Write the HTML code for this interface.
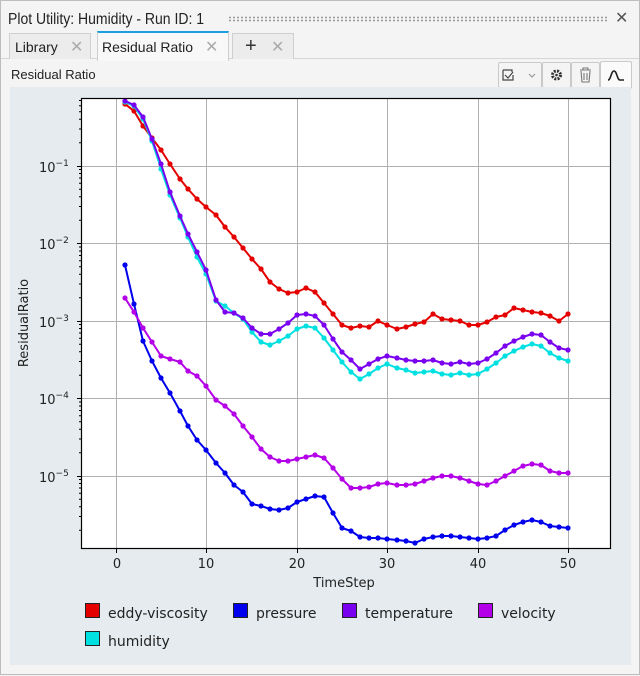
<!DOCTYPE html>
<html><head><meta charset="utf-8"><style>
body{margin:0;width:640px;height:675px;overflow:hidden;background:#f4f4f4;font-family:"Liberation Sans","DejaVu Sans",sans-serif;}
.win{position:absolute;left:0;top:0;width:638px;height:673px;border:1px solid #bdbdbd;background:#f4f4f4;}
.title{position:absolute;left:7px;top:10px;font-size:16px;color:#222;transform:scaleX(0.875);transform-origin:0 0;white-space:nowrap}
.dots{position:absolute;left:227px;top:15px;width:380px;height:6px;background-image:radial-gradient(circle,#999 0.8px,transparent 1px);background-size:4px 3px;}
.close{position:absolute;left:614px;top:7px;font-size:16px;color:#555;}
.tab{position:absolute;top:32px;height:25px;border:1px solid #cfcfcf;border-bottom:none;background:#ececec;font-size:14px;color:#222;}
.tab span{position:absolute;top:5px;}
.x{color:#aaa;font-size:16px}
.btn{position:absolute;border:1px solid #c9c9c9;border-radius:2px;background:#f4f4f4;}
</style></head><body><div class="win">
<div class="title">Plot Utility: Humidity - Run ID: 1</div>
<div class="dots"></div>
<div class="close">✕</div>
<div style="position:absolute;left:0;top:57px;width:638px;border-top:1px solid #d6d6d6"></div>
<div class="tab" style="left:8px;width:80px"><span style="left:5px">Library</span><span class="x" style="left:60px;top:3px">✕</span></div>
<div class="tab" style="left:96px;width:130px;background:#f8f8f8;border-top:2px solid #1aa0dc;top:30px;height:28px"><span style="left:4px;top:6px">Residual Ratio</span><span class="x" style="left:107px;top:4px">✕</span></div>
<div class="tab" style="left:231px;width:60px"><span style="left:12px;top:1px;font-size:20px;color:#333">+</span><span class="x" style="left:38px;top:3px">✕</span></div>
<div style="position:absolute;left:10px;top:66px;font-size:13px;color:#222">Residual Ratio</div>
<div class="btn" style="left:497px;top:61px;width:42px;height:24px"><svg width="42" height="24"><path d="M4 7h9v2M4 7v10h10v-5" fill="none" stroke="#444" stroke-width="1.2"/><path d="M6 12l3 3 5-6" fill="none" stroke="#444" stroke-width="1.2"/><path d="M30 11l3 3 3-3" fill="none" stroke="#999" stroke-width="1.2"/></svg></div>
<div class="btn" style="left:541px;top:61px;width:27px;height:24px"><svg width="27" height="24"><circle cx="13.5" cy="12" r="4" fill="none" stroke="#333" stroke-width="3" stroke-dasharray="2 1.2"/><circle cx="13.5" cy="12" r="1.3" fill="#333"/></svg></div>
<div class="btn" style="left:570px;top:61px;width:27px;height:24px"><svg width="27" height="24"><path d="M8 7h11M11 7V5h5v2M9 8l1 11h7l1-11M12 10v7M15 10v7" fill="none" stroke="#777" stroke-width="1.1"/></svg></div>
<div class="btn" style="left:599px;top:60px;width:30px;height:26px;background:#fafafa"><svg width="30" height="26"><path d="M7 18c3 0 3-9 6-9s3 9 6 9h4" fill="none" stroke="#222" stroke-width="1.6"/></svg></div>
<div style="position:absolute;left:9px;top:86px;width:621px;height:578px;background:#e5ebee"></div>
<svg style="position:absolute;left:0;top:0" width="640" height="675">
<defs>
<marker id="mr" markerWidth="6" markerHeight="6" refX="3" refY="3" markerUnits="userSpaceOnUse"><circle cx="3" cy="3" r="2.6" fill="#e50000"/></marker>
<marker id="mb" markerWidth="6" markerHeight="6" refX="3" refY="3" markerUnits="userSpaceOnUse"><circle cx="3" cy="3" r="2.6" fill="#0000ee"/></marker>
<marker id="mp" markerWidth="6" markerHeight="6" refX="3" refY="3" markerUnits="userSpaceOnUse"><circle cx="3" cy="3" r="2.6" fill="#7a00f0"/></marker>
<marker id="mc" markerWidth="6" markerHeight="6" refX="3" refY="3" markerUnits="userSpaceOnUse"><circle cx="3" cy="3" r="2.6" fill="#00e0e0"/></marker>
<marker id="mv" markerWidth="6" markerHeight="6" refX="3" refY="3" markerUnits="userSpaceOnUse"><circle cx="3" cy="3" r="2.6" fill="#b400e8"/></marker>
</defs>
<rect x="80" y="97" width="530" height="451" fill="#fff"/>
<g stroke="#b0b0b0" stroke-width="1">
<path d="M115.5 97V548M205.5 97V548M296.5 97V548M386.5 97V548M477.5 97V548M567.5 97V548M80 165.5H610M80 242.5H610M80 320.5H610M80 397.5H610M80 475.5H610"/>
</g>
<g stroke="#000" stroke-width="1" fill="none">
<path d="M115.5 548v4M205.5 548v4M296.5 548v4M386.5 548v4M477.5 548v4M567.5 548v4M80 165.5h-4M80 242.5h-4M80 320.5h-4M80 397.5h-4M80 475.5h-4"/>
<path d="M80 141.7h-2M80 128h-2M80 118.3h-2M80 110.8h-2M80 104.7h-2M80 99.5h-2M80 219.2h-2M80 205.5h-2M80 195.8h-2M80 188.3h-2M80 182.2h-2M80 177h-2M80 172.5h-2M80 168.5h-2M80 296.7h-2M80 283h-2M80 273.3h-2M80 265.8h-2M80 259.7h-2M80 254.5h-2M80 250h-2M80 246h-2M80 374.2h-2M80 360.5h-2M80 350.8h-2M80 343.3h-2M80 337.2h-2M80 332h-2M80 327.5h-2M80 323.5h-2M80 451.7h-2M80 438h-2M80 428.3h-2M80 420.8h-2M80 414.7h-2M80 409.5h-2M80 405h-2M80 401h-2M80 529.2h-2M80 515.5h-2M80 505.8h-2M80 498.3h-2M80 492.2h-2M80 487h-2M80 482.5h-2M80 478.5h-2"/>
</g>
<g fill="none" stroke-width="2" stroke-linejoin="round">
<polyline stroke="#e50000" marker-start="url(#mr)" marker-mid="url(#mr)" marker-end="url(#mr)" points="124,103 133,110 142,125 151,137 160,149 169,163 179,178 187,188 196,198 205,206 215,214 224,226 233,236 242,247 251,258 260,268 269,281 278,288 287,292 296,291 305,287 314,291 323,302 332,313 341,324 350,327 359,325 368,326 377,320 386,324 396,328 405,326 414,323 423,321 432,313 441,318 450,319 459,320 468,324 477,324 486,321 495,316 504,314 513,307 522,309 531,311 540,312 549,315 558,320 567,313"/>
<polyline stroke="#0000ee" marker-start="url(#mb)" marker-mid="url(#mb)" marker-end="url(#mb)" points="124,264 133,303 142,340 151,360 160,377 169,392 179,410 187,425 196,439 205,449 215,462 224,472 233,484 242,491 251,503 260,505 269,508 278,509 287,507 296,501 305,498 314,495 323,496 332,512 341,527 350,530 359,536 368,537 377,537 386,538 396,539 405,540 414,542 423,538 432,536 441,535 450,535 459,536 468,537 477,538 486,537 495,535 504,529 513,524 522,521 531,519 540,521 549,525 558,526 567,527"/>
<polyline stroke="#b400e8" marker-start="url(#mv)" marker-mid="url(#mv)" marker-end="url(#mv)" points="124,297 133,311 142,327 151,341 160,355 169,358 179,361 187,370 196,375 205,385 215,399 224,405 233,413 242,425 251,436 260,448 269,456 278,460 287,460 296,458 305,456 314,454 323,457 332,467 341,478 350,487 359,487 368,486 377,483 386,482 396,484 405,484 414,483 423,480 432,477 441,475 450,475 459,477 468,480 477,483 486,484 495,480 504,475 513,470 522,465 531,463 540,464 549,470 558,472 567,472"/>
<polyline stroke="#00e0e0" marker-start="url(#mc)" marker-mid="url(#mc)" marker-end="url(#mc)" points="124,101 133,105 142,118 151,140 160,168 169,194 179,217 187,236 196,256 205,273 215,300 224,305 233,312 242,318 251,331 260,341 269,344 278,340 287,335 296,328 305,325 314,327 323,337 332,349 341,361 350,371 359,378 368,373 377,367 386,363 396,367 405,369 414,372 423,371 432,370 441,373 450,374 459,372 468,374 477,373 486,368 495,362 504,355 513,350 522,346 531,343 540,345 549,352 558,357 567,360"/>
<polyline stroke="#7a00f0" marker-start="url(#mp)" marker-mid="url(#mp)" marker-end="url(#mp)" points="124,100 133,104 142,116 151,138 160,163 169,191 179,215 187,233 196,251 205,269 215,299 224,311 233,312 242,317 251,327 260,333 269,333 278,328 287,322 296,314 305,313 314,315 323,324 332,338 341,351 350,359 359,368 368,363 377,358 386,355 396,357 405,359 414,360 423,360 432,359 441,362 450,363 459,361 468,363 477,362 486,358 495,352 504,345 513,340 522,336 531,333 540,334 549,341 558,347 567,349"/>
</g>
<rect x="80.5" y="97.5" width="529" height="450" fill="none" stroke="#000" stroke-width="1.2"/>
<g font-size="13" fill="#222" font-family="DejaVu Sans,sans-serif" text-anchor="middle">
<text x="116" y="567">0</text><text x="205" y="567">10</text><text x="296" y="567">20</text><text x="386" y="567">30</text><text x="477" y="567">40</text><text x="567" y="567">50</text>
<text x="343" y="586">TimeStep</text>
<text transform="translate(27 322) rotate(-90)">ResidualRatio</text>
</g>
<g font-size="13" fill="#222" font-family="DejaVu Sans,sans-serif">
<text x="38" y="171">10<tspan dy="-6" font-size="9">−1</tspan></text>
<text x="38" y="248">10<tspan dy="-6" font-size="9">−2</tspan></text>
<text x="38" y="326">10<tspan dy="-6" font-size="9">−3</tspan></text>
<text x="38" y="403">10<tspan dy="-6" font-size="9">−4</tspan></text>
<text x="38" y="481">10<tspan dy="-6" font-size="9">−5</tspan></text>
</g>
<g stroke="#222" stroke-width="1">
<rect x="84.5" y="602.5" width="14" height="14" fill="#e50000"/>
<rect x="232.5" y="602.5" width="14" height="14" fill="#0000ee"/>
<rect x="341.5" y="602.5" width="14" height="14" fill="#7a00f0"/>
<rect x="477.5" y="602.5" width="14" height="14" fill="#b400e8"/>
<rect x="84.5" y="630.5" width="14" height="14" fill="#00e0e0"/>
</g>
<g font-size="14" fill="#222" font-family="DejaVu Sans,sans-serif">
<text x="107" y="617">eddy-viscosity</text><text x="255" y="617">pressure</text><text x="364" y="617">temperature</text><text x="500" y="617">velocity</text><text x="107" y="645">humidity</text>
</g>
</svg>
</div></body></html>
